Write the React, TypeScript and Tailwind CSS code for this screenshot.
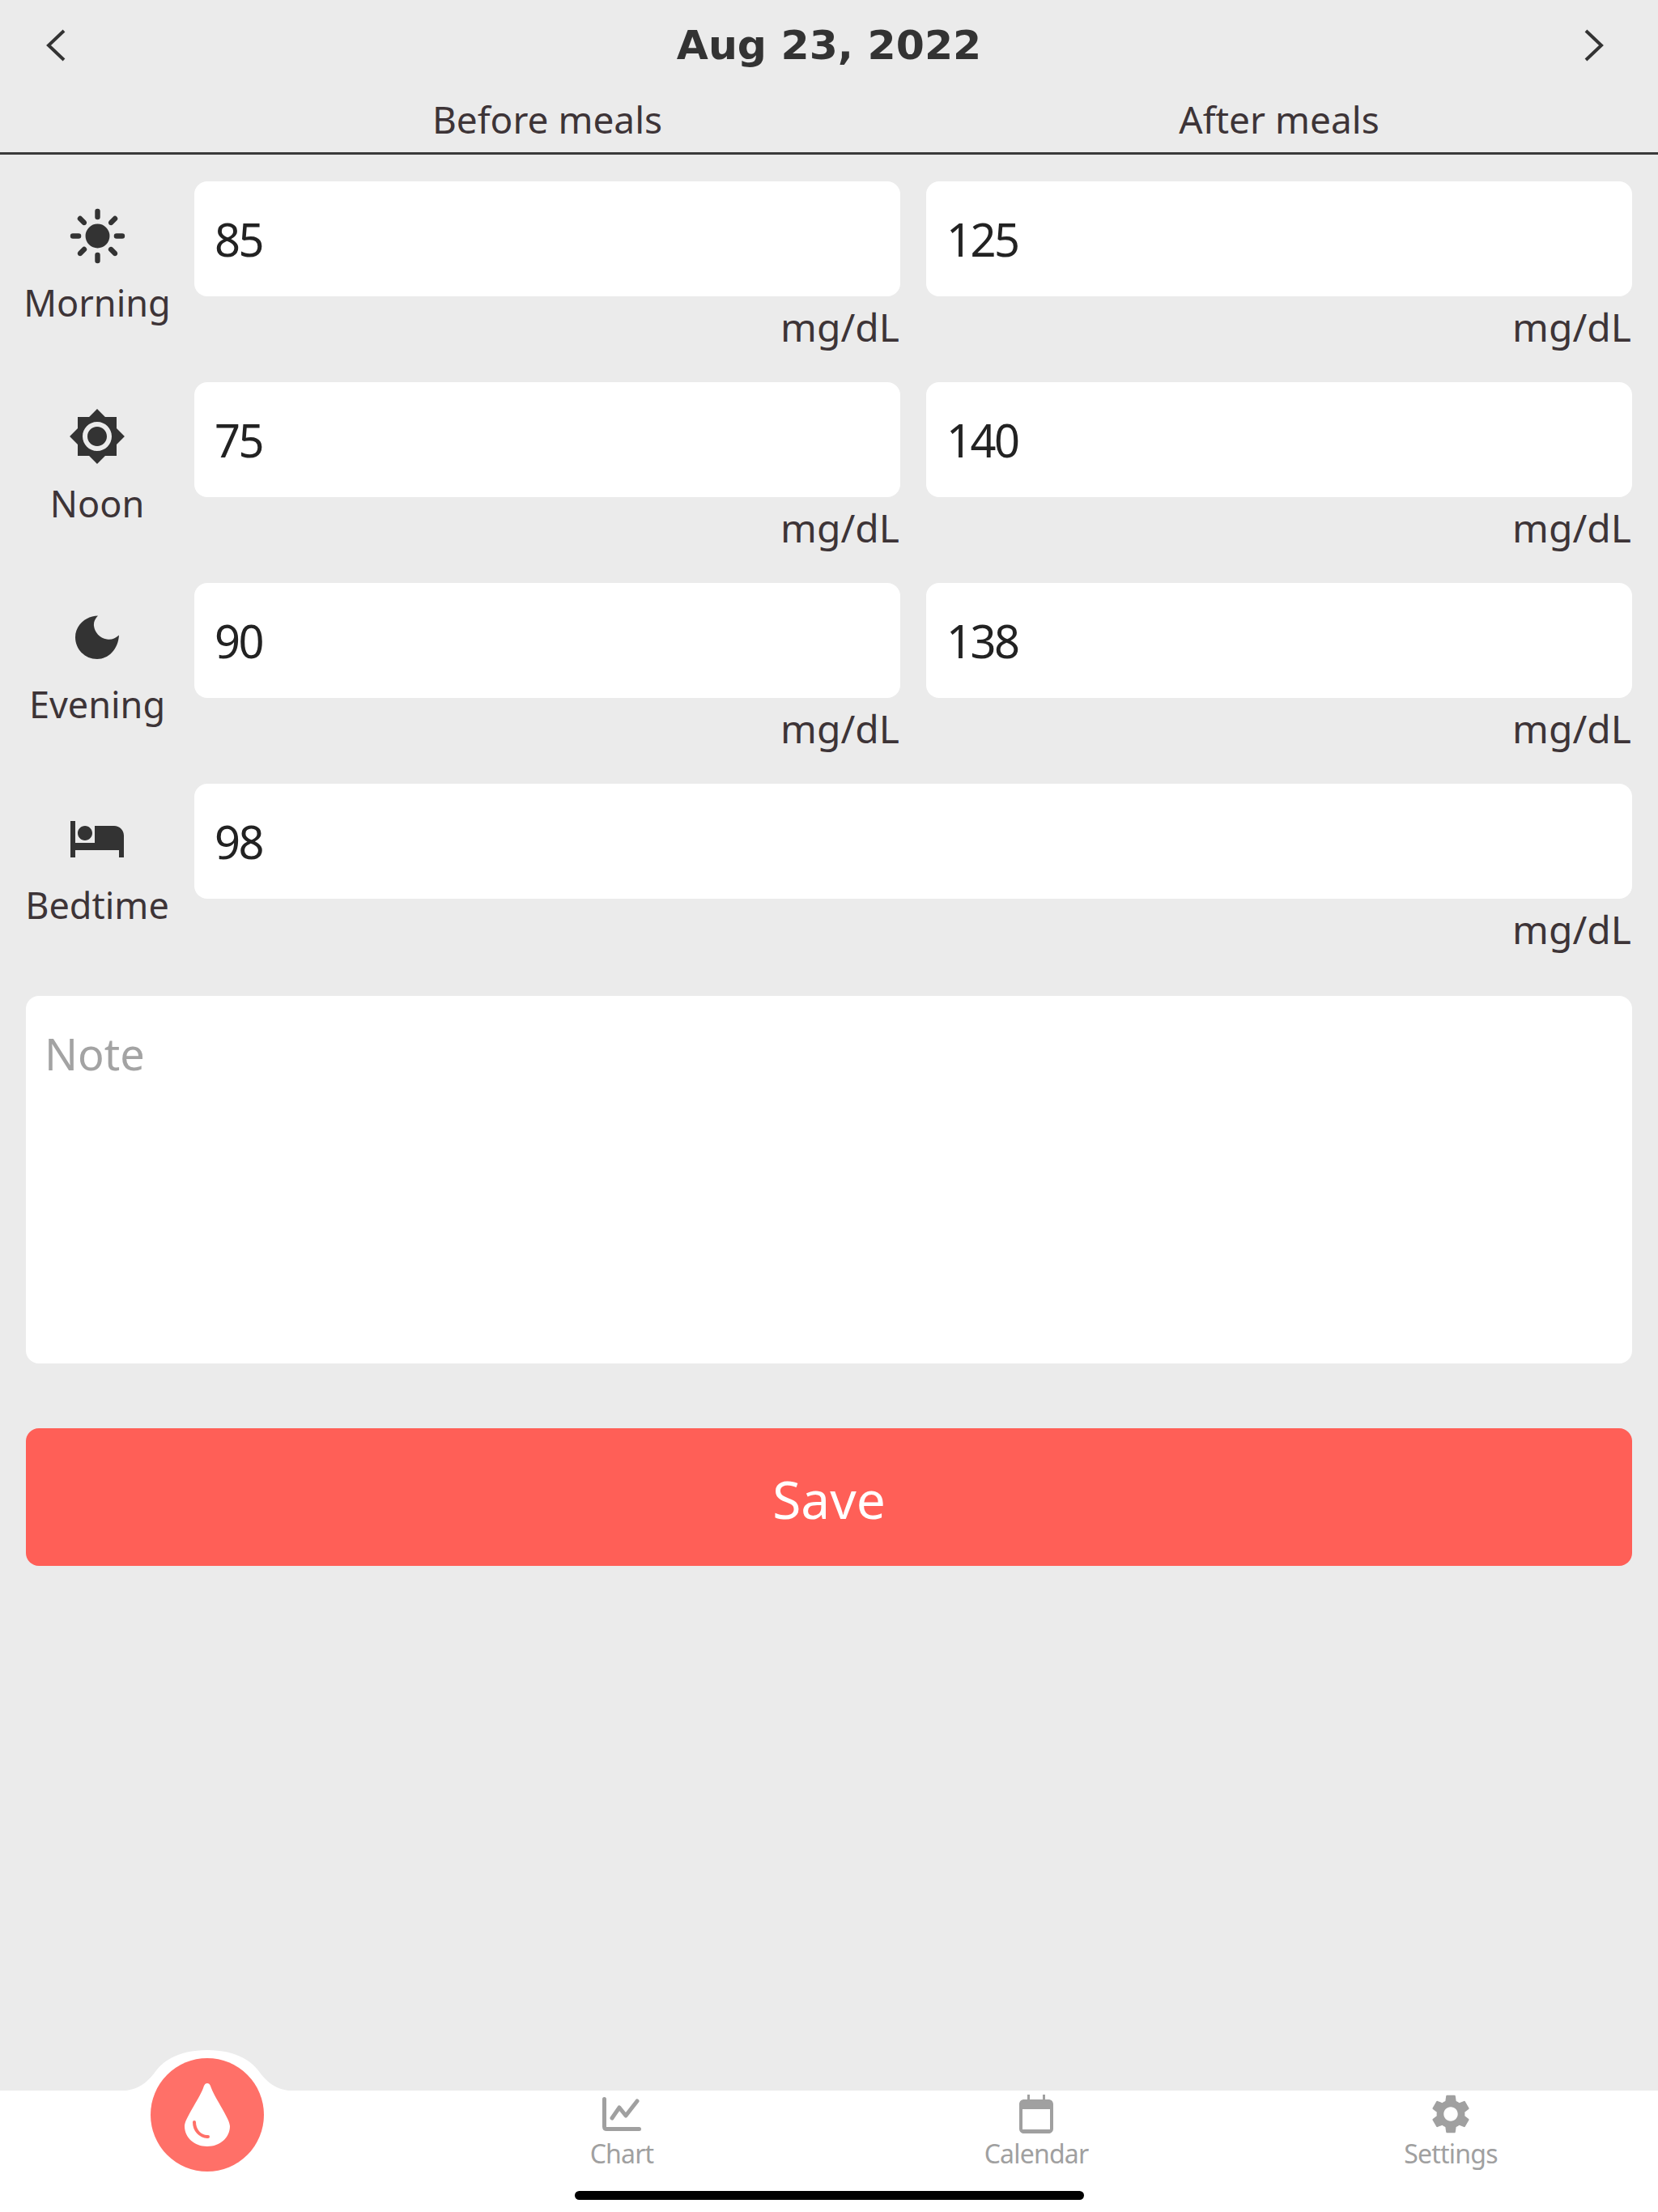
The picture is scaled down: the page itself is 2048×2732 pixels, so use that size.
import { IoSunny } from 'react-icons/io5';
import { MdBrightness7, MdHotel, MdSettings } from 'react-icons/md';
import type { ReactNode } from 'react';

const labelFont = "font-['Noto_Sans',sans-serif]";

function MoonIcon() {
  return (
    <svg width="54" height="54" viewBox="0 0 54 54" fill="#333333">
      <path d="M28 0.5C13 0.5 0 12.5 0 27c0 15 12 27 27 27 14 0 26-12 27-29.5C49 29 44 30.5 39 29.5 30 28 24 21 23 13c-.5-5 1.500-9 5-12.500z" />
    </svg>
  );
}

function ChartIcon() {
  return (
    <svg width="48" height="42" viewBox="0 0 48 42" fill="none" stroke="#a0a0a0" strokeLinecap="round" strokeLinejoin="round">
      <path d="M2.5 2.5v34c0 2 1 3 3 3h40" strokeWidth="5" />
      <path d="M12 26l9-13 8 10 14-18" strokeWidth="5" />
    </svg>
  );
}

function CalendarIcon() {
  return (
    <svg width="42" height="48" viewBox="0 0 42 48">
      <path
        fill="#a0a0a0"
        fillRule="evenodd"
        d="M10 0h3v6h16V0h3v6h4c3 0 6 2 6 6v30c0 4-3 6-6 6H6c-3 0-6-2-6-6V12c0-4 3-6 6-6h4V0zM4 18v25h34V18H4z"
      />
    </svg>
  );
}

function DropIcon() {
  return (
    <svg width="56" height="78" viewBox="0 0 56 78">
      <path
        fill="#ffffff"
        d="M28 0c3 0 4 3 5 6 6 15 23 38 23 47 0 14-12 25-28 25S0 67 0 53C0 44 17 21 23 6c1-3 2-6 5-6z"
      />
      <path d="M12 48c0 10 7 18 17 18" fill="none" stroke="#ff7068" strokeWidth="4" strokeLinecap="round" />
    </svg>
  );
}

function Chevron({ dir }: { dir: 'left' | 'right' }) {
  return (
    <svg width="26" height="40" viewBox="0 0 26 40" fill="none" stroke="#333333" strokeWidth="4">
      <path d={dir === 'left' ? 'M23 2L4 20l19 18' : 'M3 2l19 18L3 38'} />
    </svg>
  );
}

function Field({ value }: { value: string }) {
  return (
    <div className="min-w-0">
      <div className={`flex h-[142px] items-center rounded-[16px] bg-white pl-[25px] ${labelFont} text-[56px] leading-none tracking-[-2.5px] text-[#222222]`}>
        {value}
      </div>
      <div className={`mt-[15px] pr-[1px] text-right ${labelFont} text-[48px] leading-[46px] text-[#3d3437]`}>mg/dL</div>
    </div>
  );
}

function Row({ icon, label, children }: { icon: ReactNode; label: string; children: ReactNode }) {
  return (
    <div className="grid h-[248px] grid-cols-[240px_1fr] pr-[32px]">
      <div className="flex flex-col items-center pt-[32px]">
        <div className="flex h-[70px] items-center justify-center">{icon}</div>
        <div className={`mt-[23px] ${labelFont} text-[45px] leading-[50px] text-[#3d3437]`}>{label}</div>
      </div>
      {children}
    </div>
  );
}

function TabItem({ icon, label }: { icon: ReactNode; label: string }) {
  return (
    <div className="flex flex-col items-center pt-[5px]">
      <div className="flex h-[48px] items-center justify-center">{icon}</div>
      <div className={`mt-[3px] ${labelFont} text-[32px] leading-[44px] tracking-[-0.8px] text-[#a0a0a0]`}>{label}</div>
    </div>
  );
}

export default function App() {
  const readings = [
    { icon: <IoSunny size={75} color="#333333" />, label: 'Morning', before: '85', after: '125' },
    { icon: <MdBrightness7 size={72} color="#333333" />, label: 'Noon', before: '75', after: '140' },
    { icon: <MoonIcon />, label: 'Evening', before: '90', after: '138' },
  ];

  return (
    <div className="relative flex h-[2732px] w-[2048px] flex-col overflow-hidden bg-[#ebebeb]">
      <header className="h-[191px] border-b-[3px] border-[#3a3a3a]">
        <div className="grid h-[112px] grid-cols-[1fr_auto_1fr] items-center pl-[56px] pr-[66px]">
          <div className="flex justify-start">
            <Chevron dir="left" />
          </div>
          <h1 className="pl-[10px] font-['DejaVu_Sans',sans-serif] text-[50.5px] font-bold leading-none text-[#333333]">Aug 23, 2022</h1>
          <div className="flex justify-end">
            <Chevron dir="right" />
          </div>
        </div>
        <div className={`mt-[5px] grid grid-cols-[240px_1fr_1fr] pr-[32px] ${labelFont} text-[46px] leading-[60px] text-[#3d3437]`}>
          <div />
          <div className="pr-[16px] text-center">Before meals</div>
          <div className="pl-[16px] text-center">After meals</div>
        </div>
      </header>

      <main className="flex flex-1 flex-col pt-[33px]">
        {readings.map((r) => (
          <Row key={r.label} icon={r.icon} label={r.label}>
            <div className="grid grid-cols-2 gap-x-[32px]">
              <Field value={r.before} />
              <Field value={r.after} />
            </div>
          </Row>
        ))}
        <Row icon={<MdHotel size={72} color="#333333" />} label="Bedtime">
          <Field value="98" />
        </Row>

        <div className="mx-[32px] mt-[14px] h-[454px] rounded-[16px] bg-white px-[23px] pt-[36px]">
          <div className={`${labelFont} text-[54px] leading-[70px] text-[#a3a3a3]`}>Note</div>
        </div>

        <div className={`mx-[32px] mt-[80px] flex h-[170px] items-center justify-center rounded-[16px] bg-[#ff5f57] pt-[6px] ${labelFont} text-[64px] text-white`}>
          Save
        </div>
      </main>

      <nav className="relative grid h-[150px] grid-cols-4 bg-white">
        {/* bump behind the round add button */}
        <svg className="absolute left-[146px] top-[-50px]" width="220" height="51" viewBox="0 0 220 51" fill="#ffffff">
          <path d="M0 50.5c22 0 34-8 46-24C58 10 80 0 110 0s52 10 64 26.500c12 16 24 24 46 24z" />
        </svg>
        <div className="relative flex justify-center">
          <div className="absolute top-[-40px] flex h-[140px] w-[140px] items-center justify-center rounded-full bg-[#ff7068]">
            <DropIcon />
          </div>
        </div>
        <TabItem icon={<ChartIcon />} label="Chart" />
        <TabItem icon={<CalendarIcon />} label="Calendar" />
        <TabItem icon={<MdSettings size={58} color="#a0a0a0" />} label="Settings" />
        <div className="absolute left-[710px] top-[124px] h-[11px] w-[629px] rounded-full bg-black" />
      </nav>
    </div>
  );
}
